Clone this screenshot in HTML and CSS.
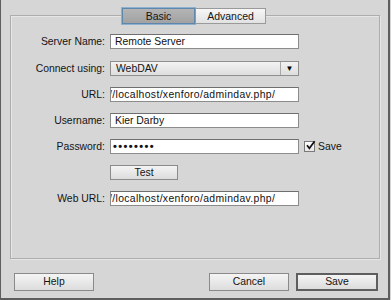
FILE: index.html
```html
<!DOCTYPE html>
<html>
<head>
<meta charset="utf-8">
<link rel="stylesheet" href="styles.css">
</head>
<body>
<div class="window">
  <div class="tabs">
    <div class="tab tab-active">Basic</div>
    <div class="tab">Advanced</div>
  </div>
  <div class="group">
    <div class="row row-first">
      <div class="label">Server Name:</div>
      <div class="field">Remote Server</div>
    </div>
    <div class="row">
      <div class="label">Connect using:</div>
      <div class="select"><span class="select-text">WebDAV</span><span class="select-arrow">▼</span></div>
    </div>
    <div class="row">
      <div class="label">URL:</div>
      <div class="field field-scrolled"><span class="scroll-text">//localhost/xenforo/admindav.php/</span></div>
    </div>
    <div class="row">
      <div class="label">Username:</div>
      <div class="field">Kier Darby</div>
    </div>
    <div class="row">
      <div class="label">Password:</div>
      <div class="field field-password">••••••••</div>
      <div class="check">
        <span class="checkbox"><svg width="11" height="11" viewBox="0 0 11 11"><path d="M2 5.2 L4.4 8.3 L9.6 1.2" fill="none" stroke="#111" stroke-width="1.7"/></svg></span>
        <span class="check-label">Save</span>
      </div>
    </div>
    <div class="row">
      <div class="label"></div>
      <div class="btn btn-test">Test</div>
    </div>
    <div class="row">
      <div class="label">Web URL:</div>
      <div class="field field-scrolled"><span class="scroll-text">//localhost/xenforo/admindav.php/</span></div>
    </div>
  </div>
  <div class="footer">
    <div class="btn btn-bottom">Help</div>
    <div class="spacer"></div>
    <div class="btn btn-bottom">Cancel</div>
    <div class="btn btn-bottom btn-default">Save</div>
  </div>
</div>
</body>
</html>
```
FILE: styles.css
```css
html, body {
  margin: 0;
  padding: 0;
  background: #d6d6d6;
}
body {
  font-family: "Liberation Sans", Arial, sans-serif;
  font-size: 10px;
  color: #141414;
}
.window {
  width: 390px;
  height: 300px;
  box-sizing: border-box;
  background: #d6d6d6;
  border-left: 1px solid #5e5e5e;
  border-right: 2px solid #5e5e5e;
  border-bottom: 2px solid #5e5e5e;
  padding: 8px 0 0 0;
  display: flex;
  flex-direction: column;
}
.tabs {
  display: flex;
  justify-content: center;
  position: relative;
  z-index: 1;
  height: 16px;
  padding-right: 1px;
}
.tab {
  box-sizing: border-box;
  height: 16px;
  line-height: 14px;
  text-align: center;
  font-size: 10.5px;
  width: 71px;
  border: 1px solid #9a9a9a;
  background: linear-gradient(#f7f7f7, #e2e2e2);
  color: #141414;
}
.tab-active {
  width: 73px;
  background: linear-gradient(#b4b4b4, #a2a2a2);
  border: 1px solid #5d87ad;
  box-shadow: 0 0 0 1px #8fb0cf;
}
.group {
  margin: -9px 8px 0 9px;
  height: 244px;
  box-sizing: border-box;
  border: 1px solid #adadad;
  box-shadow: inset 1px 1px 0 #e6e6e6, 1px 1px 0 #e6e6e6;
  padding: 18px 0 0 0;
  display: flex;
  flex-direction: column;
  gap: 11px;
}
.row {
  display: flex;
  align-items: center;
  height: 15px;
}
.row-first {
  margin-bottom: 1px;
}
.label {
  width: 94px;
  text-align: right;
  padding-right: 5px;
  font-size: 10.4px;
}
.field {
  box-sizing: border-box;
  width: 189px;
  height: 15px;
  background: #fff;
  border: 1px solid #8c8c8c;
  border-top-color: #6f6f6f;
  padding: 0 4px;
  line-height: 13px;
  font-size: 10.4px;
  color: #111;
  white-space: nowrap;
  overflow: hidden;
}
.field-scrolled {
  padding-left: 0;
}
.scroll-text {
  display: inline-block;
  margin-left: -2px;
  letter-spacing: 0.35px;
}
.field-password {
  font-size: 11px;
  font-weight: bold;
  letter-spacing: 1.4px;
  padding-left: 2px;
  line-height: 13px;
}
.select {
  box-sizing: border-box;
  width: 189px;
  height: 15px;
  border: 1px solid #8f8f8f;
  background: linear-gradient(#f2f2f2, #dedede);
  display: flex;
  align-items: center;
}
.select-text {
  flex: 1;
  padding-left: 5px;
  font-size: 10.4px;
}
.select-arrow {
  width: 17px;
  height: 13px;
  border-left: 1px solid #a8a8a8;
  font-size: 8px;
  line-height: 13px;
  text-align: center;
  color: #000;
}
.check {
  display: flex;
  align-items: center;
  margin-left: 5px;
}
.checkbox {
  box-sizing: border-box;
  width: 11px;
  height: 11px;
  border: 1px solid #7a7a7a;
  background: linear-gradient(#fff, #e6e6e6);
  display: flex;
  position: relative;
}
.checkbox svg {
  position: absolute;
  left: 0;
  top: -2px;
}
.check-label {
  margin-left: 3px;
  font-size: 10.4px;
}
.btn {
  box-sizing: border-box;
  border: 1px solid #8a8a8a;
  background: linear-gradient(#f4f4f4, #dcdcdc);
  text-align: center;
  font-size: 10.4px;
  color: #141414;
}
.btn-test {
  width: 68px;
  height: 15px;
  line-height: 13px;
}
.footer {
  display: flex;
  padding: 14px 10px 0 13px;
  gap: 7px;
}
.spacer {
  flex: 1;
}
.btn-bottom {
  width: 80px;
  height: 18px;
  line-height: 16px;
}
.btn-default {
  width: 82px;
  border: 2px solid #5e5e5e;
  line-height: 14px;
}
```
